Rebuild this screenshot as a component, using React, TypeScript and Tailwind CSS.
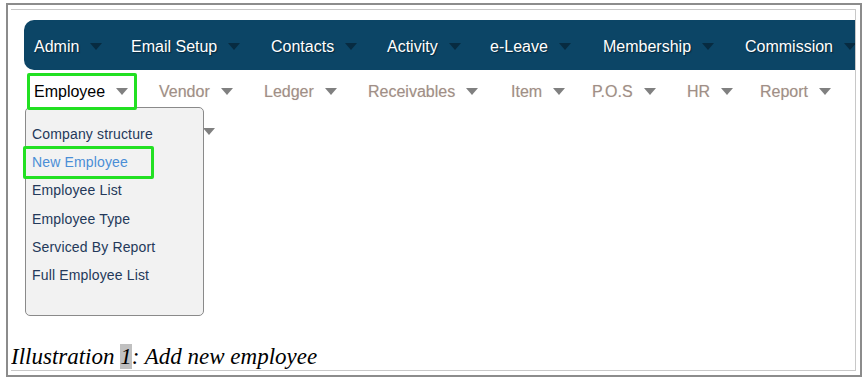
import React from 'react';

const topMenu = [
  { label: 'Admin', w: 'w-[97px]' },
  { label: 'Email Setup', w: 'w-[140px]' },
  { label: 'Contacts', w: 'w-[116px]' },
  { label: 'Activity', w: 'w-[103px]' },
  { label: 'e-Leave', w: 'w-[113px]' },
  { label: 'Membership', w: 'w-[142px]' },
  { label: 'Commission', w: 'w-[140px]' },
];

const subMenu = [
  { label: 'Vendor', w: 'w-[105px]' },
  { label: 'Ledger', w: 'w-[104px]' },
  { label: 'Receivables', w: 'w-[143px]' },
  { label: 'Item', w: 'w-[81px]' },
  { label: 'P.O.S', w: 'w-[95px]' },
  { label: 'HR', w: 'w-[73px]' },
  { label: 'Report', w: 'w-[90px]' },
];

const employeeLinks = [
  'Company structure',
  'New Employee',
  'Employee List',
  'Employee Type',
  'Serviced By Report',
  'Full Employee List',
];

// little down arrow used after every menu label
const Caret = ({ dark }: { dark?: boolean }) => (
  <span
    className={
      dark
        ? 'ml-[11px] inline-block h-0 w-0 border-x-[6px] border-t-[7px] border-x-transparent border-t-[#072b41]'
        : 'ml-[11px] inline-block h-0 w-0 border-x-[6px] border-t-[7px] border-x-transparent border-t-[#808080]'
    }
  />
);

export default function App() {
  return (
    <div className="h-[380px] w-[865px] overflow-hidden bg-white pl-[6px] pt-[3px] font-['Liberation_Sans',Arial,sans-serif]">
      <div className="h-[374px] w-[856px] border-2 border-[#8c8c8c]">
        <div className="relative ml-[3px] mt-[4px] flex h-[362px] w-[845px] flex-col overflow-hidden border-y border-r border-[#c8c8c8]">
          {/* main menu bar */}
          <div className="ml-[13px] mt-[10px] flex h-[50px] w-[840px] shrink-0 items-center rounded-l-[10px] bg-[#0c4566] pl-[10px] pt-[3px]">
            {topMenu.map((m) => (
              <div key={m.label} className={`flex shrink-0 items-center ${m.w}`}>
                <span className="text-[16px] text-white [text-shadow:1px_1px_1px_#05263a]">{m.label}</span>
                <Caret dark />
              </div>
            ))}
          </div>

          {/* second row */}
          <div className="flex h-[40px] shrink-0 items-start">
            <div className="relative z-20 ml-[16px] mt-[3px] flex h-[37px] w-[110px] shrink-0 items-center rounded-[2px] border-[3px] border-[#22e022] bg-white pl-[4px]">
              <span className="text-[16px] text-black">Employee</span>
              <Caret />
            </div>
            <div className="ml-[22px] mt-[3px] flex h-[37px] items-center">
              {subMenu.map((m) => (
                <div key={m.label} className={`flex shrink-0 items-center ${m.w}`}>
                  <span className="text-[16px] text-[#a08f87] [text-shadow:0_0_1px_#e0d6cf]">{m.label}</span>
                  <Caret />
                </div>
              ))}
            </div>
          </div>

          {/* arrow of a submenu hidden behind the dropdown */}
          <span className="absolute left-[192px] top-[118px] z-0 h-0 w-0 border-x-[6px] border-t-[7px] border-x-transparent border-t-[#808080]" />

          {/* employee dropdown */}
          <div className="absolute left-[14px] top-[97px] z-10 h-[209px] w-[179px] rounded-[5px] border border-[#8a8a8a] bg-[#f2f2f2] pl-[6px] pt-[12px]">
            {employeeLinks.map((l) => (
              <div
                key={l}
                className={
                  l === 'New Employee'
                    ? 'h-[28.2px] text-[14px] leading-[28px] tracking-[0.15px] text-[#4a8ed6]'
                    : 'h-[28.2px] text-[14px] leading-[28px] tracking-[0.15px] text-[#24395a]'
                }
              >
                {l}
              </div>
            ))}
          </div>

          {/* highlight around New Employee */}
          <div className="absolute left-[12px] top-[136px] z-30 h-[33px] w-[131px] rounded-[2px] border-[3px] border-[#22e022]" />

          {/* caption */}
          <div className="-ml-px mt-auto h-[27px] border-l border-[#c8c8c8] font-['Liberation_Serif','Times_New_Roman',serif] text-[23px] italic leading-[27px] text-black">
            Illustration <span className="bg-[#c0c0c0]">1</span>: Add new employee
          </div>
        </div>
      </div>
    </div>
  );
}
